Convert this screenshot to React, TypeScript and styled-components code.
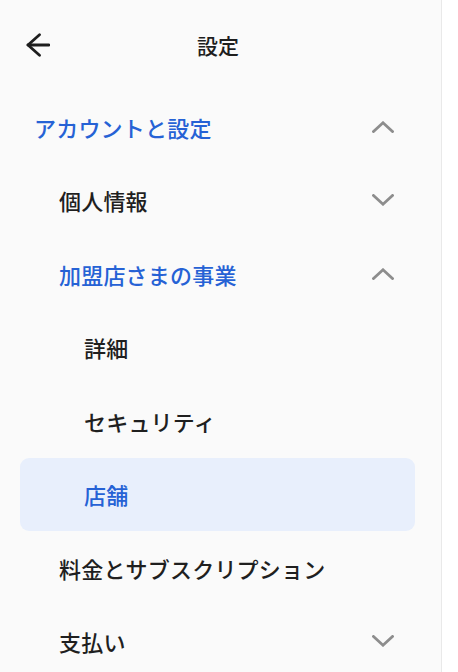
import styled, { createGlobalStyle } from "styled-components";

const Global = createGlobalStyle`
    html, body {
        margin: 0;
        padding: 0;
        background: #ffffff;
    }

    body {
        font-family: "Noto Sans CJK JP", "Noto Sans", sans-serif;
        -webkit-font-smoothing: antialiased;
    }
`;

const Page = styled.div`
    display: flex;
    width: 458px;
    height: 672px;
    overflow: hidden;
    background: #ffffff;
`;

const Panel = styled.nav`
    display: flex;
    flex-direction: column;
    width: 441px;
    height: 100%;
    background: #fafafa;
    border-right: 1px solid #e9e9e9;
`;

const Header = styled.header`
    display: flex;
    align-items: center;
    height: 90px;
    padding: 0 31px 0 26px;
    flex-shrink: 0;
`;

const BackButton = styled.button`
    display: flex;
    align-items: center;
    justify-content: center;
    width: 24px;
    height: 24px;
    padding: 0;
    border: none;
    background: none;
    color: #1e1e1e;
    cursor: pointer;
`;

const Title = styled.h1`
    flex: 1;
    margin: 0;
    text-align: center;
    font-size: 21px;
    font-weight: 500;
    color: #1e1e1e;
`;

const Spacer = styled.span`
    width: 24px;
`;

const Items = styled.ul`
    display: flex;
    flex-direction: column;
    list-style: none;
    margin: 0 26px 0 20px;
    padding: 0;
`;

const Item = styled.li<{ $level: number; $active?: boolean; $selected?: boolean }>`
    display: flex;
    align-items: center;
    justify-content: space-between;
    height: 73.5px;
    padding: 0 21px 0 ${(p) => 14 + p.$level * 25}px;
    border-radius: 9px;
    background: ${(p) => (p.$selected ? "#e8effc" : "transparent")};
    color: ${(p) => (p.$active || p.$selected ? "#2662d5" : "#1f1f1f")};
    font-size: 22px;
    font-weight: 500;
    letter-spacing: 0.2px;
    cursor: pointer;
`;

const Chevron = styled.svg`
    width: 22px;
    height: 12px;
    color: #8d8d8d;
`;

type Entry = {
    label: string;
    level: number;
    open?: boolean;
    active?: boolean;
    selected?: boolean;
};

const entries: Entry[] = [
    { label: "アカウントと設定", level: 0, open: true, active: true },
    { label: "個人情報", level: 1, open: false },
    { label: "加盟店さまの事業", level: 1, open: true, active: true },
    { label: "詳細", level: 2 },
    { label: "セキュリティ", level: 2 },
    { label: "店舗", level: 2, selected: true },
    { label: "料金とサブスクリプション", level: 1 },
    { label: "支払い", level: 1, open: false },
];

const Arrow = () => (
    <svg width="24" height="24" viewBox="0 0 24 24" fill="none" stroke="currentColor" strokeWidth="2.8" strokeLinecap="round" strokeLinejoin="round">
        <path d="M23 12H2" />
        <path d="M13.5 1.8 2 12l11.5 10.2" />
    </svg>
);

const Toggle = ({ open }: { open: boolean }) => (
    <Chevron viewBox="0 0 22 12" fill="none" stroke="currentColor" strokeWidth="2.8" strokeLinecap="square">
        {open ? <path d="M1.5 10.5 11 1.8l9.5 8.7" /> : <path d="M1.5 1.5 11 10.2l9.5-8.7" />}
    </Chevron>
);

const App = () => {
    return (
        <Page>
            <Global />
            <Panel>
                <Header>
                    <BackButton aria-label="戻る">
                        <Arrow />
                    </BackButton>
                    <Title>設定</Title>
                    <Spacer />
                </Header>
                <Items>
                    {entries.map((item, index) => (
                        <Item key={index} $level={item.level} $active={item.active} $selected={item.selected}>
                            <span>{item.label}</span>
                            {item.open !== undefined && <Toggle open={item.open} />}
                        </Item>
                    ))}
                </Items>
            </Panel>
        </Page>
    );
};

export default App;
